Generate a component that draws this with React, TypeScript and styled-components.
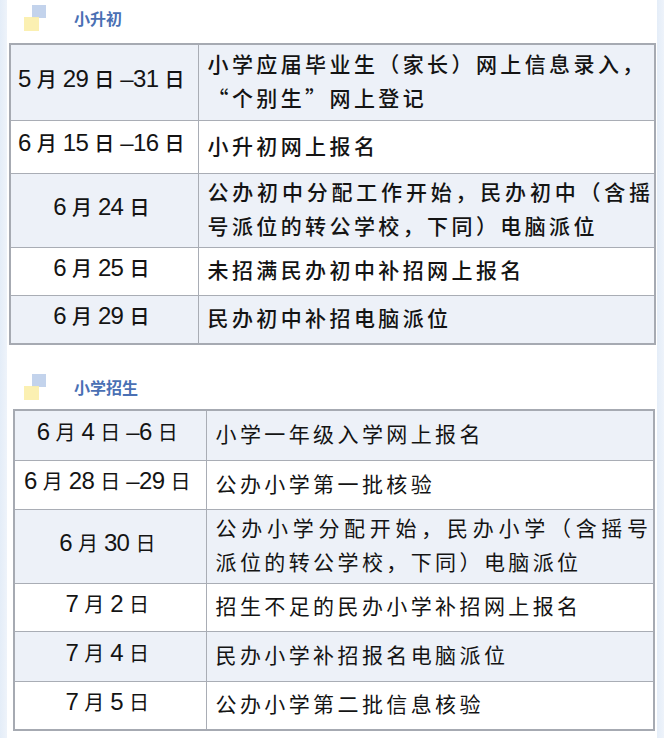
import styled, { createGlobalStyle } from 'styled-components';

const GlobalStyle = createGlobalStyle`
  html, body {
    margin: 0;
    padding: 0;
    background: #ffffff;
  }
`;

type Row = { date: string[]; text: string[]; height: number; fill?: boolean };

// date parts: digit runs and the 月 / 日 units, drawn in different fonts
const middleSchool: Row[] = [
  { date: ['5', '月', '29', '日', '–31', '日'], text: ['小学应届毕业生（家长）网上信息录入，', '“个别生”网上登记'], height: 76 },
  { date: ['6', '月', '15', '日', '–16', '日'], text: ['小升初网上报名'], height: 53 },
  { date: ['6', '月', '24', '日'], text: ['公办初中分配工作开始，民办初中（含摇', '号派位的转公学校，下同）电脑派位'], height: 74, fill: true },
  { date: ['6', '月', '25', '日'], text: ['未招满民办初中补招网上报名'], height: 48 },
  { date: ['6', '月', '29', '日'], text: ['民办初中补招电脑派位'], height: 49 },
];

const primarySchool: Row[] = [
  { date: ['6', '月', '4', '日', '–6', '日'], text: ['小学一年级入学网上报名'], height: 50 },
  { date: ['6', '月', '28', '日', '–29', '日'], text: ['公办小学第一批核验'], height: 49 },
  { date: ['6', '月', '30', '日'], text: ['公办小学分配开始，民办小学（含摇号', '派位的转公学校，下同）电脑派位'], height: 74, fill: true },
  { date: ['7', '月', '2', '日'], text: ['招生不足的民办小学补招网上报名'], height: 48 },
  { date: ['7', '月', '4', '日'], text: ['民办小学补招报名电脑派位'], height: 50 },
  { date: ['7', '月', '5', '日'], text: ['公办小学第二批信息核验'], height: 49 },
];

const SectionIcon = () => (
  <svg width="23" height="26" viewBox="0 0 23 26">
    <rect x="8" y="0" width="14" height="13" fill="#c3d3ec" />
    <rect x="0" y="12" width="15" height="14" fill="#fbeeaa" opacity="0.9" />
  </svg>
);

const DateText = ({ parts }: { parts: string[] }) => (
  <>
    {parts.map((part, i) =>
      part === '月' || part === '日' ? <Unit key={i}>{part}</Unit> : <Digits key={i}>{part}</Digits>
    )}
  </>
);

const ScheduleTable = ({
  rows,
  offset,
  width,
  dateWidth,
  weight,
  fillWidth,
}: {
  rows: Row[];
  offset: number;
  width: number;
  dateWidth: number;
  weight: number;
  fillWidth: number;
}) => (
  <Schedule $offset={offset} $width={width} $dateWidth={dateWidth} $weight={weight}>
    <tbody>
      {rows.map((row, i) => (
        <ScheduleRow key={row.date.join('')} $shaded={i % 2 === 0} style={{ height: row.height }}>
          <DateCell>
            <DateText parts={row.date} />
          </DateCell>
          <TextCell>
            {row.text.map((line, j) => {
              const fill = !!row.fill && j === 0;
              return (
                <Line key={line} $fill={fill} style={fill ? { width: fillWidth } : undefined}>
                  {line}
                </Line>
              );
            })}
          </TextCell>
        </ScheduleRow>
      ))}
    </tbody>
  </Schedule>
);

export default function App() {
  return (
    <>
      <GlobalStyle />
      <Page>
        <SideStrip />
        <Main>
          <SectionHeader $top={5} $height={43}>
            <SectionIcon />
            <SectionTitle>小升初</SectionTitle>
          </SectionHeader>
          <ScheduleTable rows={middleSchool} offset={2} width={647} dateWidth={188} weight={500} fillWidth={446} />
          <SectionHeader $top={29} $height={64}>
            <SectionIcon />
            <SectionTitle>小学招生</SectionTitle>
          </SectionHeader>
          <ScheduleTable rows={primarySchool} offset={6} width={642} dateWidth={192} weight={400} fillWidth={436} />
        </Main>
        <SideStrip />
      </Page>
    </>
  );
}

const Page = styled.div`
  width: 664px;
  height: 738px;
  display: flex;
  overflow: hidden;
  background: #ffffff;
  font-family: 'Liberation Sans', 'Noto Sans CJK SC', sans-serif;
  color: #141414;
`;

const SideStrip = styled.div`
  width: 7px;
  flex-shrink: 0;
  background: linear-gradient(90deg, #e4edf8, #eef3fa);
`;

const Main = styled.div`
  flex: 1;
  display: flex;
  flex-direction: column;
`;

const SectionHeader = styled.div<{ $top: number; $height: number }>`
  height: ${(p) => p.$height}px;
  flex-shrink: 0;
  box-sizing: border-box;
  padding: ${(p) => p.$top}px 0 0 17px;
  display: flex;
  align-items: flex-start;
  gap: 27px;
`;

const SectionTitle = styled.div`
  font-family: 'Noto Sans CJK SC', sans-serif;
  font-size: 16px;
  font-weight: 700;
  color: #4a70b4;
  line-height: 26px;
`;

const Schedule = styled.table<{ $offset: number; $width: number; $dateWidth: number; $weight: number }>`
  margin-left: ${(p) => p.$offset}px;
  width: ${(p) => p.$width}px;
  flex-shrink: 0;
  border-collapse: collapse;
  table-layout: fixed;
  border: 2px solid #a6aab2;
  font-weight: ${(p) => p.$weight};

  td:first-child {
    width: ${(p) => p.$dateWidth}px;
  }
`;

const ScheduleRow = styled.tr<{ $shaded: boolean }>`
  background: ${(p) => (p.$shaded ? '#edf1f8' : '#ffffff')};

  td {
    border: 1.5px solid #a9adb5;
  }
`;

const DateCell = styled.td`
  box-sizing: border-box;
  text-align: center;
  white-space: nowrap;
  padding: 0 0 4px;
  line-height: 30px;
`;

const Digits = styled.span`
  font-family: 'Liberation Sans', sans-serif;
  font-size: 24px;
  letter-spacing: -0.6px;
`;

const Unit = styled.span`
  font-family: 'Noto Sans CJK SC', sans-serif;
  font-size: 20px;
  margin: 0 6px;
`;

const TextCell = styled.td`
  box-sizing: border-box;
  padding: 0 0 4px 9px;
  font-family: 'Noto Sans CJK SC', sans-serif;
  font-size: 21px;
  letter-spacing: 3.4px;
  line-height: 34px;
  white-space: nowrap;
`;

const Line = styled.div<{ $fill: boolean }>`
  text-align: ${(p) => (p.$fill ? 'justify' : 'left')};
  text-align-last: ${(p) => (p.$fill ? 'justify' : 'left')};
`;
